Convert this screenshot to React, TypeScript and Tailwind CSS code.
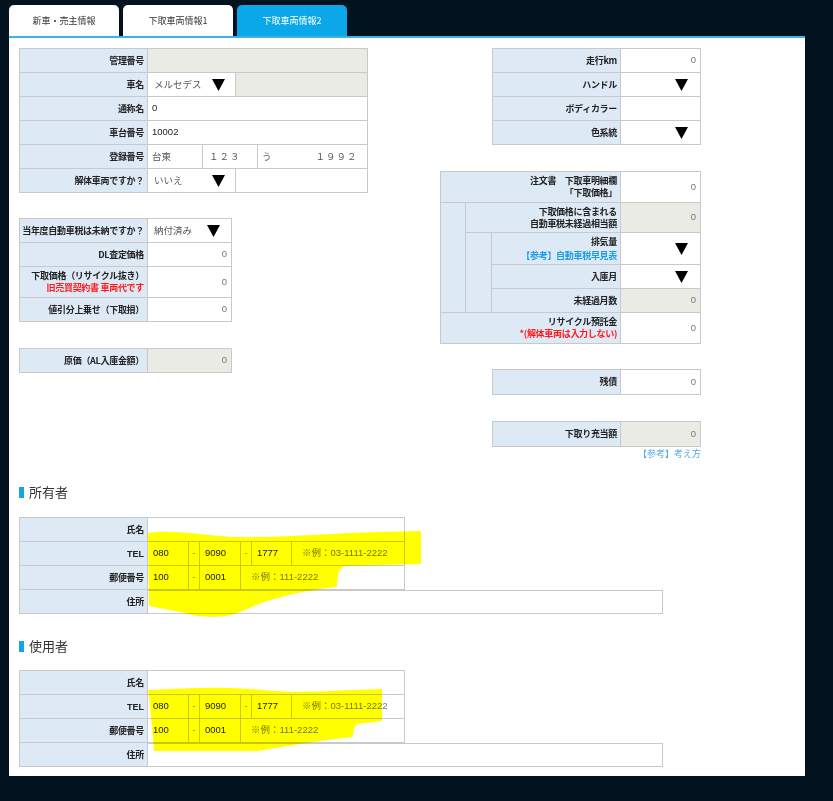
import React from "react";

const LBL =
  "bg-[#dde9f5] border-r border-b border-[#c9c9c9] flex flex-col items-end justify-center pr-[3px] text-right text-[9px] tracking-[-0.3px] leading-[12px] font-bold text-[#222] font-['Noto_Sans_CJK_JP',sans-serif] whitespace-nowrap";
const VAL =
  "bg-white border-r border-b border-[#c9c9c9] flex items-center text-[9.5px] font-['Liberation_Sans','Noto_Sans_CJK_JP',sans-serif] whitespace-nowrap";
const GRAY =
  "bg-[#ebebe5] border-r border-b border-[#c9c9c9] flex items-center justify-end pr-[4px] text-[9.5px] text-[#777] font-['Liberation_Sans',sans-serif]";

function Tri() {
  return (
    <svg width="13" height="12" viewBox="0 0 13 12" className="shrink-0">
      <polygon points="0,0 13,0 6.5,12" fill="#000" />
    </svg>
  );
}

function Heading({ text }: { text: string }) {
  return (
    <div className="flex items-center h-[18px]">
      <div className="w-[5px] h-[11px] bg-[#12a5e6]" />
      <div className="ml-[5px] text-[13px] leading-[18px] text-[#333] font-['Noto_Sans_CJK_JP',sans-serif]">
        {text}
      </div>
    </div>
  );
}

function PersonTable() {
  return (
    <div className="flex flex-col w-fit">
      <div className="flex w-fit border-t border-l border-[#c9c9c9]">
        <div className={LBL + " w-[128px] h-[24px]"}>氏名</div>
        <div className={VAL + " w-[257px] h-[24px]"} />
      </div>
      <div className="flex w-fit border-l border-[#c9c9c9]">
        <div className={LBL + " w-[128px] h-[24px]"}>
          <span className="font-['Liberation_Sans',sans-serif] tracking-normal">TEL</span>
        </div>
        <div className={VAL + " w-[41px] h-[24px] pl-[5px] text-[#222]"}>080</div>
        <div className={VAL + " w-[11px] h-[24px] justify-center text-[#999]"}>-</div>
        <div className={VAL + " w-[41px] h-[24px] pl-[5px] text-[#222]"}>9090</div>
        <div className={VAL + " w-[11px] h-[24px] justify-center text-[#999]"}>-</div>
        <div className={VAL + " w-[40px] h-[24px] pl-[5px] text-[#222]"}>1777</div>
        <div className={VAL + " w-[113px] h-[24px] pl-[10px] text-[#777]"}>※例：03-1111-2222</div>
      </div>
      <div className="flex w-fit border-l border-[#c9c9c9]">
        <div className={LBL + " w-[128px] h-[24px]"}>郵便番号</div>
        <div className={VAL + " w-[41px] h-[24px] pl-[5px] text-[#222]"}>100</div>
        <div className={VAL + " w-[11px] h-[24px] justify-center text-[#999]"}>-</div>
        <div className={VAL + " w-[41px] h-[24px] pl-[5px] text-[#222]"}>0001</div>
        <div className={VAL + " w-[164px] h-[24px] pl-[10px] text-[#777]"}>※例：111-2222</div>
      </div>
      <div className="flex w-fit border-l border-[#c9c9c9]">
        <div className={LBL + " w-[128px] h-[24px]"}>住所</div>
        <div className={VAL + " w-[515px] h-[24px] border-t"} />
      </div>
    </div>
  );
}

export default function App() {
  return (
    <div className="relative w-[833px] h-[801px] bg-[#02131f] overflow-hidden pl-[9px] pt-[5px]">
      {/* tabs */}
      <div className="flex gap-[4px] font-['Noto_Sans_CJK_JP',sans-serif] text-[9px]">
        <div className="w-[110px] h-[31px] bg-white rounded-t-[5px] flex items-center justify-center text-[#333]">
          新車・売主情報
        </div>
        <div className="w-[110px] h-[31px] bg-white rounded-t-[5px] flex items-center justify-center text-[#333]">
          下取車両情報1
        </div>
        <div className="w-[110px] h-[31px] bg-[#0aa8e8] rounded-t-[5px] flex items-center justify-center text-white">
          下取車両情報2
        </div>
      </div>

      {/* panel */}
      <div className="w-[796px] h-[740px] bg-white border-t-2 border-[#3ab3e8]">
        <div className="flex pl-[10px] pt-[10px]">
          {/* left column */}
          <div className="w-[349px] flex flex-col">
            <div className="flex flex-col w-fit border-t border-l border-[#c9c9c9]">
              <div className="flex">
                <div className={LBL + " w-[128px] h-[24px]"}>管理番号</div>
                <div className={GRAY + " w-[220px] h-[24px]"} />
              </div>
              <div className="flex">
                <div className={LBL + " w-[128px] h-[24px]"}>車名</div>
                <div className={VAL + " w-[88px] h-[24px] pl-[6px] pr-[10px] justify-between text-[#555]"}>
                  <span className="font-['Noto_Sans_CJK_JP',sans-serif]">メルセデス</span>
                  <Tri />
                </div>
                <div className={GRAY + " w-[132px] h-[24px]"} />
              </div>
              <div className="flex">
                <div className={LBL + " w-[128px] h-[24px]"}>通称名</div>
                <div className={VAL + " w-[220px] h-[24px] pl-[4px] text-[#222]"}>0</div>
              </div>
              <div className="flex">
                <div className={LBL + " w-[128px] h-[24px]"}>車台番号</div>
                <div className={VAL + " w-[220px] h-[24px] pl-[4px] text-[#222]"}>10002</div>
              </div>
              <div className="flex">
                <div className={LBL + " w-[128px] h-[24px]"}>登録番号</div>
                <div className={VAL + " w-[55px] h-[24px] pl-[4px] text-[#555]"}>
                  <span className="font-['Noto_Sans_CJK_JP',sans-serif]">台東</span>
                </div>
                <div className={VAL + " w-[55px] h-[24px] pl-[6px] text-[#555]"}>
                  <span className="font-['Noto_Sans_CJK_JP',sans-serif] tracking-[1px]">１２３</span>
                </div>
                <div className={VAL + " w-[110px] h-[24px] pl-[4px] text-[#555]"}>
                  <span className="font-['Noto_Sans_CJK_JP',sans-serif]">う</span>
                  <span className="ml-[44px] font-['Noto_Sans_CJK_JP',sans-serif] tracking-[1px]">１９９２</span>
                </div>
              </div>
              <div className="flex">
                <div className={LBL + " w-[128px] h-[24px]"}>解体車両ですか？</div>
                <div className={VAL + " w-[88px] h-[24px] pl-[6px] pr-[10px] justify-between text-[#555]"}>
                  <span className="font-['Noto_Sans_CJK_JP',sans-serif]">いいえ</span>
                  <Tri />
                </div>
                <div className={VAL + " w-[132px] h-[24px]"} />
              </div>
            </div>

            <div className="mt-[25px] flex flex-col w-fit border-t border-l border-[#c9c9c9]">
              <div className="flex">
                <div className={LBL + " w-[128px] h-[24px]"}>当年度自動車税は未納ですか？</div>
                <div className={VAL + " w-[84px] h-[24px] pl-[6px] pr-[11px] justify-between text-[#555]"}>
                  <span className="font-['Noto_Sans_CJK_JP',sans-serif]">納付済み</span>
                  <Tri />
                </div>
              </div>
              <div className="flex">
                <div className={LBL + " w-[128px] h-[24px]"}>DL査定価格</div>
                <div className={VAL + " w-[84px] h-[24px] justify-end pr-[4px] text-[#777]"}>0</div>
              </div>
              <div className="flex">
                <div className={LBL + " w-[128px] h-[31px]"}>
                  <span>下取価格（リサイクル抜き）</span>
                  <span className="text-[#ff1a1a]">旧売買契約書 車両代です</span>
                </div>
                <div className={VAL + " w-[84px] h-[31px] justify-end pr-[4px] text-[#777]"}>0</div>
              </div>
              <div className="flex">
                <div className={LBL + " w-[128px] h-[24px]"}>値引分上乗せ（下取損）</div>
                <div className={VAL + " w-[84px] h-[24px] justify-end pr-[4px] text-[#777]"}>0</div>
              </div>
            </div>

            <div className="mt-[26px] flex w-fit border-t border-l border-[#c9c9c9]">
              <div className={LBL + " w-[128px] h-[24px]"}>原価（AL入庫金額）</div>
              <div className={GRAY + " w-[84px] h-[24px]"}>0</div>
            </div>
          </div>

          {/* right column */}
          <div className="ml-[72px] w-[261px] flex flex-col items-end">
            <div className="flex flex-col w-fit border-t border-l border-[#c9c9c9]">
              <div className="flex">
                <div className={LBL + " w-[128px] h-[24px]"}>走行km</div>
                <div className={VAL + " w-[80px] h-[24px] justify-end pr-[4px] text-[#777]"}>0</div>
              </div>
              <div className="flex">
                <div className={LBL + " w-[128px] h-[24px]"}>ハンドル</div>
                <div className={VAL + " w-[80px] h-[24px] justify-end pr-[12px]"}>
                  <Tri />
                </div>
              </div>
              <div className="flex">
                <div className={LBL + " w-[128px] h-[24px]"}>ボディカラー</div>
                <div className={VAL + " w-[80px] h-[24px]"} />
              </div>
              <div className="flex">
                <div className={LBL + " w-[128px] h-[24px]"}>色系統</div>
                <div className={VAL + " w-[80px] h-[24px] justify-end pr-[12px]"}>
                  <Tri />
                </div>
              </div>
            </div>

            <div className="mt-[26px] grid grid-cols-[25px_26px_129px_80px] grid-rows-[31px_30px_32px_24px_24px_31px] w-fit border-t border-l border-[#c9c9c9]">
              <div className={LBL + " col-span-3"}>
                <span>注文書　下取車明細欄</span>
                <span>「下取価格」</span>
              </div>
              <div className={VAL + " justify-end pr-[4px] text-[#777]"}>0</div>

              <div className="row-span-4 bg-[#dde9f5] border-r border-b border-[#c9c9c9]" />
              <div className={LBL + " col-span-2"}>
                <span>下取価格に含まれる</span>
                <span>自動車税未経過相当額</span>
              </div>
              <div className={GRAY}>0</div>

              <div className="row-span-3 bg-[#dde9f5] border-r border-b border-[#c9c9c9]" />
              <div className={LBL}>
                <span>排気量</span>
                <span className="text-[#1d9be6] mt-[2px]">【参考】自動車税早見表</span>
              </div>
              <div className={VAL + " justify-end pr-[12px]"}>
                <Tri />
              </div>

              <div className={LBL}>入庫月</div>
              <div className={VAL + " justify-end pr-[12px]"}>
                <Tri />
              </div>

              <div className={LBL}>未経過月数</div>
              <div className={GRAY}>0</div>

              <div className={LBL + " col-span-3"}>
                <span>リサイクル預託金</span>
                <span className="text-[#ff1a1a]">*(解体車両は入力しない)　</span>
              </div>
              <div className={VAL + " justify-end pr-[4px] text-[#777]"}>0</div>
            </div>

            <div className="mt-[25px] flex w-fit border-t border-l border-[#c9c9c9]">
              <div className={LBL + " w-[128px] h-[25px]"}>残債</div>
              <div className={VAL + " w-[80px] h-[25px] justify-end pr-[4px] text-[#777]"}>0</div>
            </div>

            <div className="mt-[26px] flex w-fit border-t border-l border-[#c9c9c9]">
              <div className={LBL + " w-[128px] h-[25px]"}>下取り充当額</div>
              <div className={GRAY + " w-[80px] h-[25px]"}>0</div>
            </div>
            <div className="mt-[1px] text-[9px] leading-[12px] text-[#4aa8e8] font-['Noto_Sans_CJK_JP',sans-serif]">
              【参考】考え方
            </div>
          </div>
        </div>

        {/* owner */}
        <div className="pl-[10px] mt-[23px]">
          <Heading text="所有者" />
          <div className="mt-[16px]">
            <PersonTable />
          </div>
        </div>

        {/* user */}
        <div className="pl-[10px] mt-[23px]">
          <Heading text="使用者" />
          <div className="mt-[15px]">
            <PersonTable />
          </div>
        </div>
      </div>

      {/* highlighter marks */}
      <svg
        width="833"
        height="801"
        viewBox="0 0 833 801"
        className="absolute left-0 top-0 pointer-events-none mix-blend-multiply"
      >
        <path
          d="M148,533 C175,529 205,536 235,537 C280,538 330,533 380,532 L421,531 L421,564 L345,566 C339,568 337,575 337,587 C305,590 270,598 245,610 C228,618 205,619 185,613 L149,606 Z"
          fill="#ffff00"
        />
        <path
          d="M148,690 C185,688 225,686 262,690 C300,694 340,690 382,689 L382,721 L358,724 C354,726 353,730 353,737 C322,740 292,745 258,751 L154,751 L150,705 Z"
          fill="#ffff00"
        />
      </svg>
    </div>
  );
}
